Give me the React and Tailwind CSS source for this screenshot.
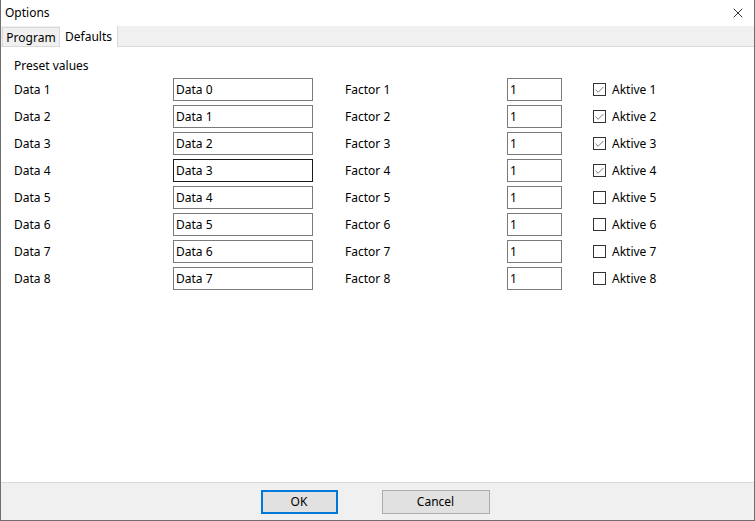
import { Check, X } from 'lucide-react';

const rows = [1, 2, 3, 4, 5, 6, 7, 8];

function Field({ value, focused, className }) {
  return (
    <div className={`h-[23px] flex items-center pl-[2px] bg-white border ${focused ? 'border-[#1b1b1b]' : 'border-[#7a7a7a]'} ${className}`}>
      {value}
    </div>
  );
}

export default function App() {
  return (
    <div className="w-[755px] h-[521px] flex flex-col bg-white border-x border-b border-[#6e6e6e] text-[12px] text-black" style={{ fontFamily: '"Noto Sans", "Segoe UI", sans-serif' }}>
      <div className="h-[26px] flex items-center justify-between pl-[4px] pr-[8px] shrink-0">
        <span>Options</span>
        <X size={16} strokeWidth={1.2} className="text-black" />
      </div>
      <div className="h-[21px] flex items-end bg-[#f0f0f0] border-b border-[#d9d9d9] shrink-0">
        <div className="ml-[1px] h-[19px] w-[58px] flex items-center justify-center pt-[1px] border border-b-0 border-[#d9d9d9] bg-[#f0f0f0]">Program</div>
        <div className="h-[21px] w-[58px] flex items-center justify-center border-r border-[#d9d9d9] bg-white -mb-px">Defaults</div>
      </div>
      <div className="flex-1 pl-[13px] pt-[10px]">
        <div className="h-[18px] leading-[18px]">Preset values</div>
        <div className="mt-[3px] flex flex-col gap-[4px]">
          {rows.map((n) => (
            <div key={n} className="flex items-center h-[23px]">
              <span className="w-[159px]">Data {n}</span>
              <Field value={`Data ${n - 1}`} focused={n === 4} className="w-[140px]" />
              <span className="ml-[32px] w-[162px]">Factor {n}</span>
              <Field value="1" className="w-[55px]" />
              <div className="ml-[31px] w-[13px] h-[13px] border border-[#333] flex items-center justify-center">
                {n <= 4 && <Check size={12} strokeWidth={1.4} className="text-[#333]" />}
              </div>
              <span className="ml-[6px]">Aktive {n}</span>
            </div>
          ))}
        </div>
      </div>
      <div className="h-[38px] bg-[#f0f0f0] border-t border-[#d9d9d9] flex items-center justify-center gap-[44px] shrink-0 pr-[5px]">
        <div className="w-[77px] h-[24px] border-2 border-[#0078d7] bg-[#e1e1e1] flex items-center justify-center">OK</div>
        <div className="w-[108px] h-[24px] border border-[#adadad] bg-[#e1e1e1] flex items-center justify-center">Cancel</div>
      </div>
    </div>
  );
}
